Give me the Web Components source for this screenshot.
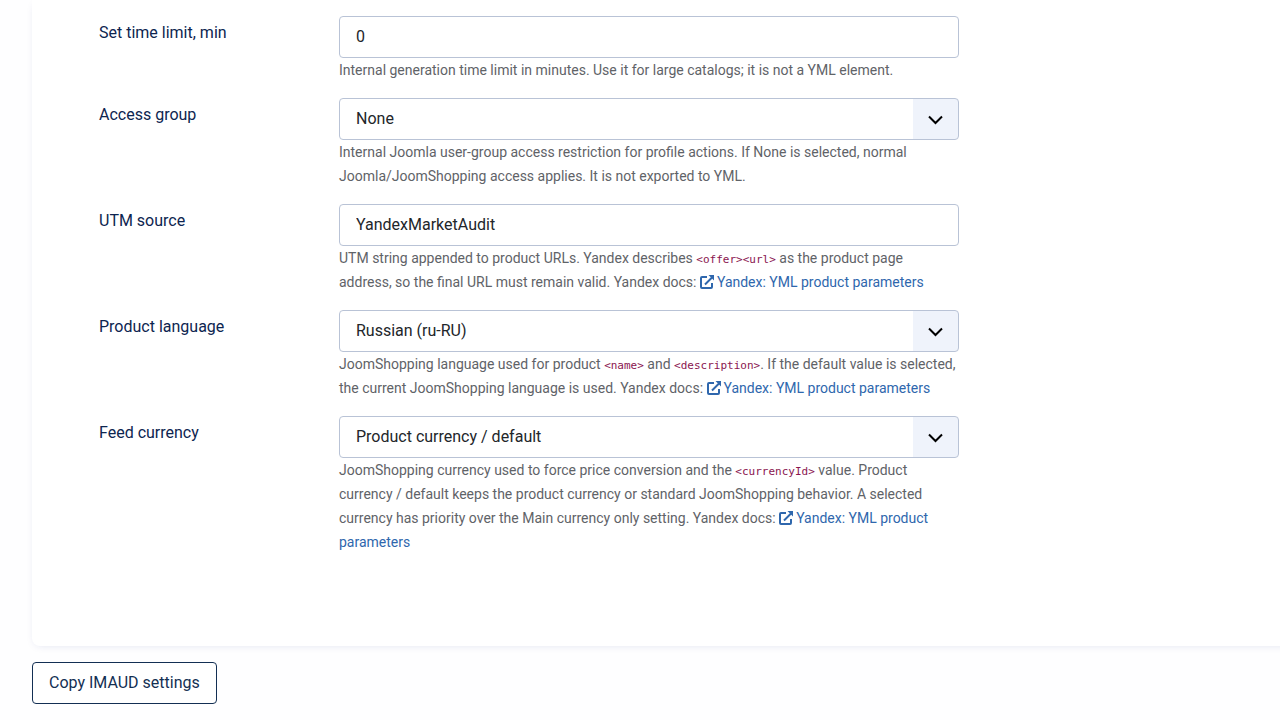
<!DOCTYPE html>
<html lang="en">
<head>
<meta charset="utf-8">
<meta name="viewport" content="width=device-width, initial-scale=1">
<title>Profile settings</title>
<style>
body { margin: 0; background: #fefeff; color: #212529; font: 16px/24px Roboto, "Liberation Sans", sans-serif; overflow-x: hidden; }
form-field code { color: #8a1550; font: 11px/16px "DejaVu Sans Mono", "Liberation Mono", monospace; }
</style>
</head>
<body>
<settings-page>
  <settings-card>
    <form-field label="Set time limit, min" value="0">Internal generation time limit in minutes. Use it for large catalogs; it is not a YML element.</form-field>
    <form-field label="Access group" type="select" value="None">Internal Joomla user-group access restriction for profile actions. If None is selected, normal Joomla/JoomShopping access applies. It is not exported to YML.</form-field>
    <form-field label="UTM source" value="YandexMarketAudit">UTM string appended to product URLs. Yandex describes <code>&lt;offer&gt;&lt;url&gt;</code> as the product page address, so the final URL must remain valid. Yandex docs: <doc-link>Yandex: YML product parameters</doc-link></form-field>
    <form-field label="Product language" type="select" value="Russian (ru-RU)">JoomShopping language used for product <code>&lt;name&gt;</code> and <code>&lt;description&gt;</code>. If the default value is selected, the current JoomShopping language is used. Yandex docs: <doc-link>Yandex: YML product parameters</doc-link></form-field>
    <form-field label="Feed currency" type="select" value="Product currency / default">JoomShopping currency used to force price conversion and the <code>&lt;currencyId&gt;</code> value. Product currency / default keeps the product currency or standard JoomShopping behavior. A selected currency has priority over the Main currency only setting. Yandex docs: <doc-link>Yandex: YML product parameters</doc-link></form-field>
  </settings-card>
  <outline-button slot="actions">Copy IMAUD settings</outline-button>
</settings-page>

<script>
class BaseElement extends HTMLElement {
  render(html) { this.attachShadow({ mode: 'open' }).innerHTML = html; }
}

customElements.define('settings-page', class extends BaseElement {
  constructor() {
    super();
    this.render(`
      <style>
        :host { display: block; padding-left: 32px; }
        footer { padding: 16px 0; }
      </style>
      <main><slot></slot></main>
      <footer><slot name="actions"></slot></footer>`);
  }
});

customElements.define('settings-card', class extends BaseElement {
  constructor() {
    super();
    this.render(`
      <style>
        :host { display: flex; flex-direction: column; gap: 16px; margin-right: -16px; padding: 16px 16px 92px 67px;
          background: #fff; border-radius: 0 0 8px 8px; box-shadow: 0 2px 10px -4px rgba(20, 40, 130, .18); }
      </style>
      <slot></slot>`);
  }
});

customElements.define('form-field', class extends BaseElement {
  constructor() {
    super();
    const isSelect = this.getAttribute('type') === 'select';
    this.render(`
      <style>
        :host { display: grid; grid-template-columns: 240px minmax(0, 620px); }
        label { padding-top: 5px; color: #0d2550; }
        .control { display: grid; grid-template-columns: 1fr 46px; align-items: center; }
        input, select { grid-area: 1 / 1 / 2 / 3; box-sizing: border-box; width: 100%; min-width: 0; height: 42px; margin: 0;
          padding: 8px 16px; border: 1px solid #b9c3d6; border-radius: 4px; background: #fff; color: #22262a; font: inherit; line-height: 24px; outline: 0; }
        input { padding: 7px 16px 9px; }
        select { appearance: none; background: linear-gradient(#eff3fb, #eff3fb) right / 45px 100% no-repeat #fff; }
        input:focus, select:focus { border-color: #2a69b8; }
        svg { grid-area: 1 / 2; z-index: 1; margin-left: 15px; width: 16px; height: 16px; pointer-events: none; }
        .hint { color: #5f6368; font-size: 14px; line-height: 24px; }
      </style>
      <label for="control"></label>
      <div>
        <div class="control">${isSelect
          ? `<select id="control" aria-describedby="hint"><option></option></select>
             <svg viewBox="0 0 16 16" aria-hidden="true"><path d="M1 5.500 7.500 12l6.500-6.500" fill="none" stroke="#000" stroke-width="2"/></svg>`
          : '<input id="control" type="text" aria-describedby="hint">'}</div>
        <div class="hint" id="hint"><slot></slot></div>
      </div>`);
    this.shadowRoot.querySelector('label').textContent = this.getAttribute('label');
    const value = this.getAttribute('value');
    if (isSelect) this.shadowRoot.querySelector('option').textContent = value;
    else this.shadowRoot.querySelector('input').value = value;
  }
});

customElements.define('doc-link', class extends BaseElement {
  constructor() {
    super();
    this.render(`
      <style>
        :host { display: inline; }
        a { color: #2f67ad; text-decoration: none; }
        a:hover { text-decoration: underline; }
        svg { width: 14px; height: 14px; margin-right: 3px; vertical-align: -2px; }
      </style>
      <a href="#docs"><svg viewBox="0 0 14 14" aria-hidden="true" fill="none" stroke="currentColor" stroke-width="2"><path d="M7 2H2a1 1 0 0 0-1 1v9a1 1 0 0 0 1 1h9a1 1 0 0 0 1-1V8M5 9.500 12 2.500"/><path d="M8.500 0H14v5.500Z" fill="currentColor" stroke="none"/></svg><slot></slot></a>`);
  }
});

customElements.define('outline-button', class extends BaseElement {
  constructor() {
    super();
    this.render(`
      <style>
        :host { display: inline-block; vertical-align: top; }
        button { display: block; padding: 8px 16px; border: 1px solid #132f53; border-radius: 4px; background: #fff; color: #132f53; font: inherit; line-height: 24px; cursor: pointer; }
        button:hover { background: #eff3fb; }
      </style>
      <button type="button"><slot></slot></button>`);
  }
});
</script>
</body>
</html>
